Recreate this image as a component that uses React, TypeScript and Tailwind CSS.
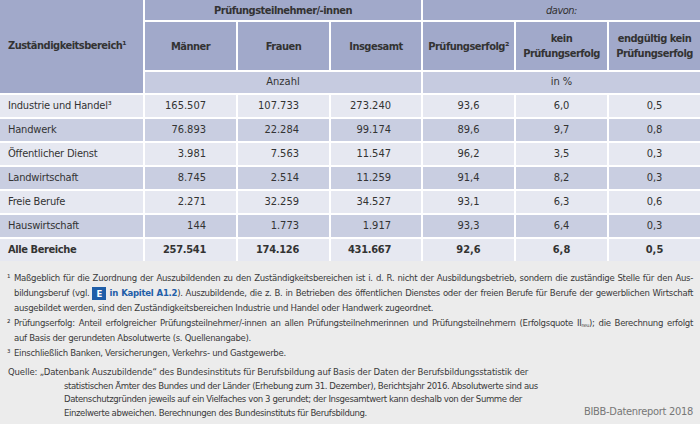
import React from 'react';

const font = "font-['Liberation_Sans_Narrow','DejaVu_Sans_Condensed','Liberation_Sans',sans-serif]";

const rows = [
  { label: 'Industrie und Handel³', m: '165.507', f: '107.733', s: '273.240', a: '93,6', b: '6,0', c: '0,5' },
  { label: 'Handwerk', m: '76.893', f: '22.284', s: '99.174', a: '89,6', b: '9,7', c: '0,8' },
  { label: 'Öffentlicher Dienst', m: '3.981', f: '7.563', s: '11.547', a: '96,2', b: '3,5', c: '0,3' },
  { label: 'Landwirtschaft', m: '8.745', f: '2.514', s: '11.259', a: '91,4', b: '8,2', c: '0,3' },
  { label: 'Freie Berufe', m: '2.271', f: '32.259', s: '34.527', a: '93,1', b: '6,3', c: '0,6' },
  { label: 'Hauswirtschaft', m: '144', f: '1.773', s: '1.917', a: '93,3', b: '6,4', c: '0,3' },
];

const head = 'bg-[#a1a9ca] flex items-center justify-center text-center font-bold tracking-[-0.5px] leading-[15px]';
const line = 'whitespace-nowrap';
const just = 'whitespace-nowrap text-justify [text-align-last:justify]';

export default function App() {
  return (
    <div className={`w-[700px] h-[424px] overflow-hidden bg-[#ececec] text-[#333] ${font}`}>
      {/* Table */}
      <div className="grid grid-cols-[143px_91px_91px_90px_91px_91px_91px] grid-rows-[20px_48px_21px] auto-rows-[22px] gap-[2px] bg-white text-[11px]">
        <div className="row-span-3 bg-[#a1a9ca] flex items-center pl-2 font-bold tracking-[-0.5px]">Zuständigkeitsbereich¹</div>
        <div className={`${head} col-span-3`}>Prüfungsteilnehmer/-innen</div>
        <div className={`${head} col-span-3 italic !font-normal`}>davon:</div>
        <div className={head}>Männer</div>
        <div className={head}>Frauen</div>
        <div className={head}>Insgesamt</div>
        <div className={head}>Prüfungserfolg²</div>
        <div className={head}>kein<br />Prüfungserfolg</div>
        <div className={head}>endgültig kein<br />Prüfungserfolg</div>
        <div className="col-span-3 bg-[#c6cbe0] flex items-center justify-center">Anzahl</div>
        <div className="col-span-3 bg-[#c6cbe0] flex items-center justify-center">in %</div>

        {rows.map((r, i) => {
          const bg = i % 2 === 0 ? 'bg-[#e6e8f1]' : 'bg-[#c9cee1]';
          return (
            <React.Fragment key={r.label}>
              <div className={`${bg} flex items-center pl-2 tracking-[-0.2px]`}>{r.label}</div>
              <div className={`${bg} flex items-center justify-end pr-[30px]`}>{r.m}</div>
              <div className={`${bg} flex items-center justify-end pr-[30px]`}>{r.f}</div>
              <div className={`${bg} flex items-center justify-end pr-[30px]`}>{r.s}</div>
              <div className={`${bg} flex items-center justify-center`}>{r.a}</div>
              <div className={`${bg} flex items-center justify-center`}>{r.b}</div>
              <div className={`${bg} flex items-center justify-center`}>{r.c}</div>
            </React.Fragment>
          );
        })}

        {/* Total row */}
        <div className="bg-[#e6e8f1] flex items-center pl-2 font-bold tracking-[-0.4px]">Alle Bereiche</div>
        <div className="bg-[#e6e8f1] flex items-center justify-end pr-[30px] font-bold tracking-[-0.3px]">257.541</div>
        <div className="bg-[#e6e8f1] flex items-center justify-end pr-[30px] font-bold tracking-[-0.3px]">174.126</div>
        <div className="bg-[#e6e8f1] flex items-center justify-end pr-[30px] font-bold tracking-[-0.3px]">431.667</div>
        <div className="bg-[#e6e8f1] flex items-center justify-center font-bold">92,6</div>
        <div className="bg-[#e6e8f1] flex items-center justify-center font-bold">6,8</div>
        <div className="bg-[#e6e8f1] flex items-center justify-center font-bold">0,5</div>
      </div>

      {/* Footnotes */}
      <div className="pt-[9px] px-[7px] text-[9.5px] leading-[15px] tracking-[-0.3px] text-[#3a3a3a]">
        <div className="grid grid-cols-[7px_1fr]">
          <span>¹</span>
          <div>
            <div className={just}>
              Maßgeblich für die Zuordnung der Auszubildenden zu den Zuständigkeitsbereichen ist i. d. R. nicht der Ausbildungsbetrieb, sondern die zuständige Stelle für den Aus-
            </div>
            <div className={just}>
              bildungsberuf (vgl.{' '}
              <span className="inline-flex items-center justify-center w-[14px] h-[13px] bg-[#1f5ea8] text-white font-bold align-middle tracking-normal">E</span>
              {' '}<span className="text-[#1f5ea8] font-bold">in Kapitel A1.2</span>). Auszubildende, die z. B. in Betrieben des öffentlichen Dienstes oder der freien Berufe für Berufe der gewerblichen Wirtschaft
            </div>
            <div className={line}>ausgebildet werden, sind den Zuständigkeitsbereichen Industrie und Handel oder Handwerk zugeordnet.</div>
          </div>
          <span>²</span>
          <div>
            <div className={just}>
              Prüfungserfolg: Anteil erfolgreicher Prüfungsteilnehmer/-innen an allen Prüfungsteilnehmerinnen und Prüfungsteilnehmern (Erfolgsquote II<sub className="text-[5px]">neu</sub>); die Berechnung erfolgt
            </div>
            <div className={line}>auf Basis der gerundeten Absolutwerte (s. Quellenangabe).</div>
          </div>
          <span>³</span>
          <div className={line}>Einschließlich Banken, Versicherungen, Verkehrs- und Gastgewerbe.</div>
        </div>

        <div className="mt-[5px] flex items-end justify-between leading-[13.5px]">
          <div className="w-[502px] pl-px">
            <div className="whitespace-nowrap tracking-[-0.15px]">
              Quelle: „Datenbank Auszubildende“ des Bundesinstituts für Berufsbildung auf Basis der Daten der Berufsbildungsstatistik der
            </div>
            <div className="pl-[56px] tracking-[-0.4px]">
              <div className={line}>statistischen Ämter des Bundes und der Länder (Erhebung zum 31. Dezember), Berichtsjahr 2016. Absolutwerte sind aus</div>
              <div className={line}>Datenschutzgründen jeweils auf ein Vielfaches von 3 gerundet; der Insgesamtwert kann deshalb von der Summe der</div>
              <div className={line}>Einzelwerte abweichen. Berechnungen des Bundesinstituts für Berufsbildung.</div>
            </div>
          </div>
          <span className="text-[11px] text-[#777] tracking-[-0.3px] pb-px">BIBB-Datenreport 2018</span>
        </div>
      </div>
    </div>
  );
}
